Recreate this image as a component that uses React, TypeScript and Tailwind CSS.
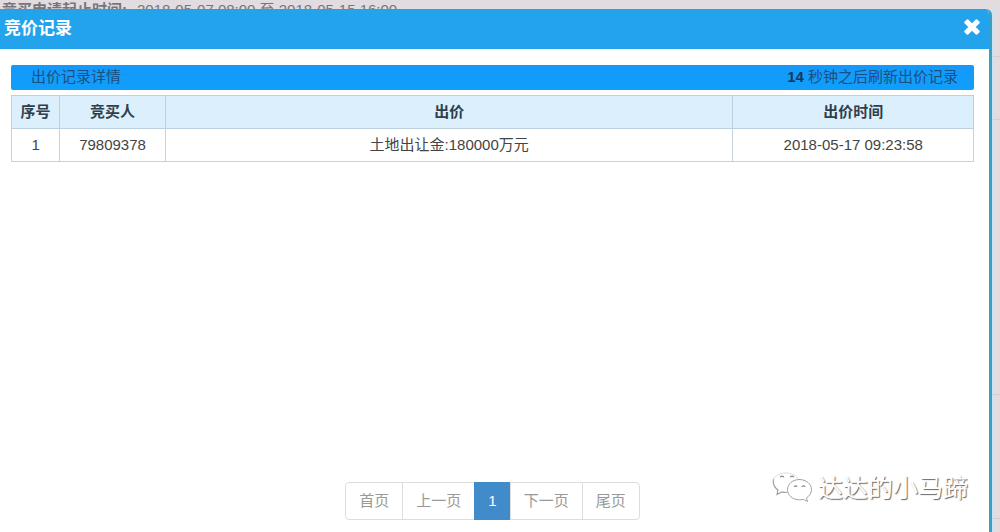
import { useState } from "react"

interface BidRecord {
  no: number
  bidder: string
  price: string
  time: string
}

const records: BidRecord[] = [
  { no: 1, bidder: "79809378", price: "土地出让金:180000万元", time: "2018-05-17 09:23:58" },
]

const pages = ["首页", "上一页", "1", "下一页", "尾页"]

function CloseIcon() {
  return (
    <svg viewBox="0 0 18 18" className="w-[18px] h-[18px]" aria-hidden="true">
      <path
        d="M5.200 1.500 9 5.300l3.800-3.800a1 1 0 0 1 1.400 0l2.300 2.300a1 1 0 0 1 0 1.400L12.700 9l3.800 3.800a1 1 0 0 1 0 1.400l-2.300 2.300a1 1 0 0 1-1.400 0L9 12.700l-3.800 3.800a1 1 0 0 1-1.400 0l-2.300-2.300a1 1 0 0 1 0-1.400L5.300 9 1.500 5.200a1 1 0 0 1 0-1.400l2.300-2.300a1 1 0 0 1 1.400 0z"
        fill="#fff"
      />
    </svg>
  )
}

function WechatIcon() {
  return (
    <svg viewBox="0 0 42 32" className="w-[42px] h-8" fill="none" strokeLinecap="round" aria-hidden="true">
      {/* 左侧气泡 */}
      <path d="M1.500 7C.6 12 2.500 15.500 6 18l-1 4.300 5-2.400c1.800.5 3.200.7 5 .6" stroke="#a3a3a3" strokeWidth="1.200" />
      <path d="M1.500 7C3 3.500 8 1 14 1c6 0 10.500 2.500 12.200 6.500" stroke="#dcdcdc" strokeWidth="1" />
      <path d="M8.500 4.800q1.500-1.400 3 0M18.500 4.800q1.500-1.400 3 0" stroke="#8c8c8c" strokeWidth="1.200" />
      {/* 右侧气泡 */}
      <path
        d="M27.500 7.500c6.800 0 12 4.500 12 10.100 0 3.400-2 6.400-5 8.200l1 3.800-4.200-2.300c-1.200.3-2.500.5-3.800.5-6.800 0-12-4.500-12-10.200s5.200-10.100 12-10.100z"
        fill="#fff"
        stroke="#a3a3a3"
        strokeWidth="1"
      />
      <path d="M22.300 14.400q1.300-1.200 2.600 0M30.300 14.400q1.300-1.200 2.600 0" stroke="#858585" strokeWidth="1.200" />
    </svg>
  )
}

export default function App() {
  const [current, setCurrent] = useState("1")

  return (
    <div className="relative min-h-screen flex flex-col overflow-hidden bg-[#e0dce0] text-[15px] leading-5 text-[#444] font-['Liberation_Sans','Noto_Sans_CJK_SC',sans-serif]">
      {/* 被弹窗遮住的页面内容 */}
      <div className="h-[9px] overflow-hidden flex gap-[10px] pl-[2px] text-[#77757b] whitespace-nowrap">
        <span className="font-bold">竞买申请起止时间:</span>
        <span>2018-05-07 08:00 至 2018-05-15 16:00</span>
      </div>

      <div className="flex-1 flex">
        <div
          role="dialog"
          aria-labelledby="bid-title"
          className="flex-1 flex flex-col bg-[#fefffe] border-r-[3px] border-[#3d9fc0] rounded-tr-md overflow-hidden"
        >
          <div className="h-10 shrink-0 flex items-center justify-between bg-[#23a3ec] pl-1 pr-2">
            <h1 id="bid-title" className="text-[17px] font-bold text-white">竞价记录</h1>
            <button type="button" aria-label="关闭" className="pb-1">
              <CloseIcon />
            </button>
          </div>

          <div className="flex-1 flex flex-col pt-4 pl-[11px] pr-[15px] pb-3">
            <div className="h-[25px] flex items-center justify-between rounded-xs bg-linear-to-b from-[#1498fb] to-[#109ffa] pl-5 pr-4 pb-[2px] text-[#1c4f80]">
              <span>出价记录详情</span>
              <span>
                <b className="text-[#12385c]">14</b> 秒钟之后刷新出价记录
              </span>
            </div>

            <table className="mt-[5px] w-full table-fixed border-collapse text-center">
              <colgroup>
                <col className="w-[5%]" />
                <col className="w-[11%]" />
                <col className="w-[59%]" />
                <col className="w-[25%]" />
              </colgroup>
              <thead className="bg-[#dceffd] text-[#2f3f4c]">
                <tr className="h-[33px]">
                  <th className="border border-[#bdd0df]">序号</th>
                  <th className="border border-[#bdd0df]">竞买人</th>
                  <th className="border border-[#bdd0df]">出价</th>
                  <th className="border border-[#bdd0df]">出价时间</th>
                </tr>
              </thead>
              <tbody>
                {records.map((r) => (
                  <tr key={r.no} className="h-[33px]">
                    <td className="border border-[#c5d3de]">{r.no}</td>
                    <td className="border border-[#c5d3de]">{r.bidder}</td>
                    <td className="border border-[#c5d3de]">{r.price}</td>
                    <td className="border border-[#c5d3de]">{r.time}</td>
                  </tr>
                ))}
              </tbody>
            </table>

            <nav aria-label="分页" className="mt-auto flex justify-center">
              {pages.map((p) => (
                <button
                  key={p}
                  type="button"
                  onClick={() => p === "1" && setCurrent(p)}
                  className={`-ml-px first:ml-0 px-[13px] py-2 border first:rounded-l last:rounded-r ${
                    p === current ? "bg-[#428bca] border-[#428bca] text-white" : "border-[#ddd] text-[#999]"
                  }`}
                >
                  {p}
                </button>
              ))}
            </nav>
          </div>
        </div>

        {/* 右侧露出的页面边缘 */}
        <div className="w-2 flex flex-col border-l border-[#c9e2f2]">
          <div className="h-12 border-b border-[#d2ccd4]" />
          <div className="h-[63px] border-b border-[#d2ccd4]" />
          <div className="h-[275px] border-b border-[#d2ccd4]" />
          <div className="h-[124px] border-b border-[#d2ccd4]" />
        </div>
      </div>

      {/* 公众号水印 */}
      <div className="absolute right-8 bottom-6 flex items-center gap-1 pointer-events-none">
        <WechatIcon />
        <span className="text-[25px] leading-10 text-white [text-shadow:1px_1px_1px_#666]">达达的小马蹄</span>
      </div>
    </div>
  )
}
